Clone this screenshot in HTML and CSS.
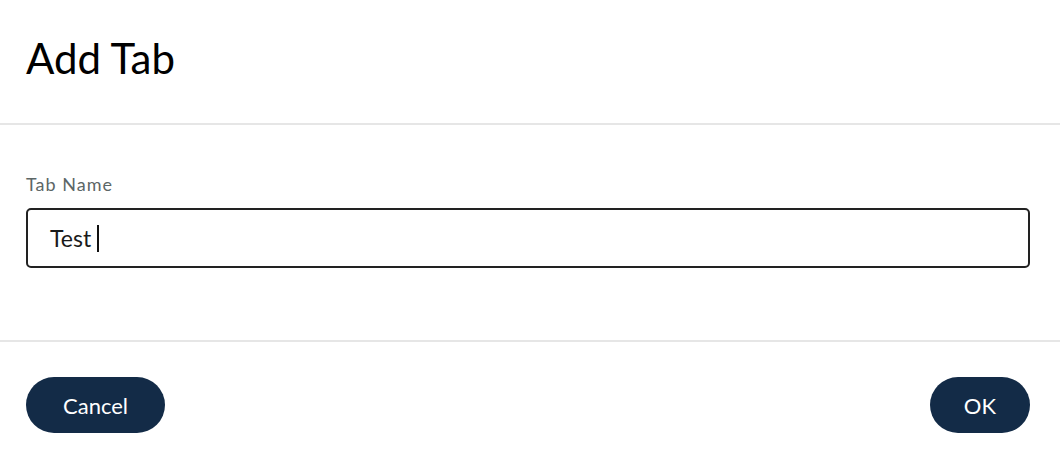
FILE: index.html
```html
<!DOCTYPE html>
<html lang="en">
<head>
  <meta charset="UTF-8">
  <title>Add Tab</title>
  <link rel="stylesheet" href="styles.css">
</head>
<body>

  <div class="dialog">
    <div class="dialog-header">
      <h1>Add Tab</h1>
    </div>

    <div class="dialog-body">
      <label class="field-label" for="tabName">Tab Name</label>
      <div class="field-input">
        <span class="field-value">Test</span><span class="caret"></span>
      </div>
    </div>

    <div class="dialog-footer">
      <button class="btn btn-cancel">Cancel</button>
      <button class="btn btn-ok">OK</button>
    </div>
  </div>

</body>
</html>
```

FILE: styles.css
```css
body {
  font-family: Lato, "Open Sans", sans-serif;
  background: #ffffff;
  margin: 0;
  padding: 0;
  color: #111111;
}

.dialog {
  width: 1060px;
  height: 460px;
  display: flex;
  flex-direction: column;
}

.dialog-header {
  height: 125px;
  border-bottom: 2px solid #e6e6e6;
  padding: 30px 26px 0;
  box-sizing: border-box;
}

h1 {
  margin: 0;
  font-size: 42px;
  line-height: 56px;
  font-weight: 400;
  color: #000000;
}

.dialog-body {
  height: 217px;
  border-bottom: 2px solid #e6e6e6;
  padding: 48px 30px 0 26px;
  box-sizing: border-box;
}

.field-label {
  display: block;
  font-size: 18px;
  line-height: 22px;
  letter-spacing: 1px;
  color: #5c6666;
  margin-bottom: 13px;
}

.field-input {
  height: 60px;
  box-sizing: border-box;
  border: 2px solid #222222;
  border-radius: 5px;
  padding: 0 22px;
  display: flex;
  align-items: center;
}

.field-value {
  font-size: 23px;
  color: #1a1a1a;
}

.caret {
  display: inline-block;
  width: 2px;
  height: 27px;
  background: #111111;
  margin-left: 6px;
}

.dialog-footer {
  flex: 1;
  padding: 8px 30px 0 26px;
  display: flex;
  align-items: center;
  justify-content: space-between;
}

.btn {
  height: 56px;
  font-family: inherit;
  font-size: 22px;
  border-radius: 28px;
  border: none;
  background-color: #132b47;
  color: white;
  cursor: pointer;
}

.btn-cancel {
  padding: 0 37px;
}

.btn-ok {
  padding: 0 34px;
}
```
